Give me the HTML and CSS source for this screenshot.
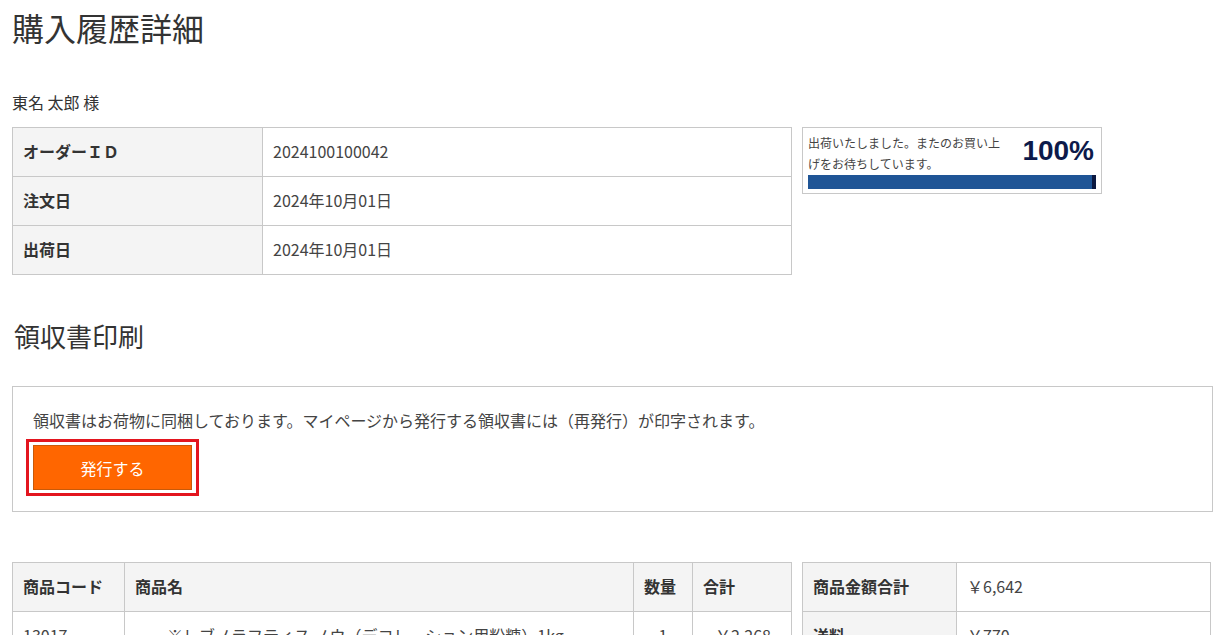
FILE: index.html
```html
<!DOCTYPE html>
<html lang="ja">
<head>
    <meta charset="UTF-8">
    <meta name="viewport" content="width=device-width, initial-scale=1.0">
    <title>購入履歴詳細</title>
    <link rel="stylesheet" href="styles.css">
</head>
<body>
    <div class="page">
        <h1 class="page-title">購入履歴詳細</h1>
        <p class="customer">東名 太郎 様</p>

        <div class="row">
            <table class="info-table order-table">
                <tr>
                    <th>オーダーＩＤ</th>
                    <td>2024100100042</td>
                </tr>
                <tr>
                    <th>注文日</th>
                    <td>2024年10月01日</td>
                </tr>
                <tr>
                    <th>出荷日</th>
                    <td>2024年10月01日</td>
                </tr>
            </table>

            <div class="status-box">
                <div class="status-head">
                    <p class="status-text">出荷いたしました。またのお買い上げをお待ちしています。</p>
                    <span class="status-rate">100%</span>
                </div>
                <div class="status-bar">
                    <div class="status-fill" style="width: 100%"></div>
                </div>
            </div>
        </div>

        <h2 class="section-title">領収書印刷</h2>
        <div class="receipt-box">
            <p class="receipt-note">領収書はお荷物に同梱しております。マイページから発行する領収書には（再発行）が印字されます。</p>
            <div class="highlight">
                <button class="button-orange">発行する</button>
            </div>
        </div>

        <div class="row">
            <table class="info-table items-table">
                <tr>
                    <th class="col-code">商品コード</th>
                    <th class="col-name">商品名</th>
                    <th class="col-qty">数量</th>
                    <th class="col-sum">合計</th>
                </tr>
                <tr>
                    <td>13017</td>
                    <td class="item-name">※レブノラフティス ノウ（デコレーション用粉糖）1kg</td>
                    <td class="qty">1</td>
                    <td class="price">￥2,268</td>
                </tr>
            </table>

            <table class="info-table totals-table">
                <tr>
                    <th>商品金額合計</th>
                    <td>￥6,642</td>
                </tr>
                <tr>
                    <th>送料</th>
                    <td>￥770</td>
                </tr>
            </table>
        </div>
    </div>
</body>
</html>
```

FILE: styles.css
```css
html, body {
    margin: 0;
    background-color: #fff;
    color: #444;
    font-family: "Noto Sans CJK JP", "Noto Sans", sans-serif;
    font-size: 16px;
}
.page {
    padding: 8px 12px;
}
.page-title {
    margin: 0;
    font-size: 32px;
    font-weight: normal;
    line-height: 38px;
    color: #333;
}
.customer {
    margin: 44px 0 13px;
    line-height: 24px;
    font-size: 16px;
    color: #333;
}
.row {
    display: flex;
    align-items: flex-start;
    gap: 10px;
}
.info-table {
    border-collapse: collapse;
}
.info-table th,
.info-table td {
    border: 1px solid #c8c8c8;
    height: 49px;
    padding: 0 10px 2px;
    text-align: left;
    line-height: 24px;
    box-sizing: border-box;
    font-size: 16px;
}
.info-table th {
    background-color: #f4f4f4;
    font-weight: bold;
    color: #333;
}
.order-table {
    width: 780px;
}
.order-table th {
    width: 250px;
}
.status-box {
    width: 300px;
    box-sizing: border-box;
    border: 1px solid #c8c8c8;
    padding: 4px 5px 4px;
}
.status-head {
    display: flex;
    justify-content: space-between;
    align-items: center;
}
.status-text {
    margin: 0;
    width: 196px;
    font-size: 12px;
    line-height: 21px;
    color: #444;
}
.status-rate {
    font-family: "Liberation Sans", Arial, sans-serif;
    font-size: 28px;
    font-weight: bold;
    color: #0d1a4a;
    padding: 0 2px 4px 0;
}
.status-bar {
    margin-top: 1px;
    height: 14px;
    background-color: #e6e6e6;
}
.status-fill {
    height: 100%;
    box-sizing: border-box;
    background-color: #1f5596;
    border-right: 4px solid #0b1840;
}
.section-title {
    margin: 45px 0 34px 2px;
    font-size: 26px;
    font-weight: normal;
    line-height: 32px;
    color: #333;
}
.receipt-box {
    border: 1px solid #c8c8c8;
    padding: 21px 20px 15px;
}
.receipt-note {
    margin: 0 0 7px;
    line-height: 24px;
    font-size: 16px;
}
.highlight {
    display: inline-block;
    margin-left: -7px;
    border: 3px solid #e3151f;
    padding: 3px 4px;
}
.button-orange {
    display: block;
    width: 159px;
    height: 45px;
    border: 1px solid #c85a0a;
    background-color: #ff6600;
    color: #fff;
    font-family: inherit;
    font-size: 16px;
    cursor: pointer;
}
.receipt-box + .row {
    margin-top: 50px;
}
.items-table {
    width: 780px;
}
.col-code {
    width: 112px;
}
.col-qty {
    width: 59px;
}
.col-sum {
    width: 99px;
}
.items-table .item-name {
    padding-left: 42px;
}
.items-table .qty {
    text-align: center;
}
.items-table .price {
    text-align: right;
    padding-right: 20px;
}
.totals-table {
    width: 409px;
}
.totals-table th {
    width: 154px;
}
```
